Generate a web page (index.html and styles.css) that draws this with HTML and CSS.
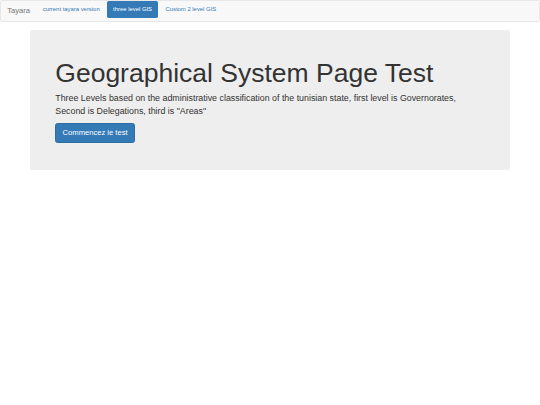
FILE: index.html
```html
<!DOCTYPE html>
<html>
<head>
<meta charset="utf-8">
<title>Geographical System Page Test</title>
<link rel="stylesheet" href="styles.css">
</head>
<body>
<nav class="navbar">
  <a class="brand" href="#">Tayara</a>
  <ul class="pills">
    <li><a href="#">current tayara version</a></li>
    <li class="active"><a href="#">three level GIS</a></li>
    <li><a href="#">Custom 2 level GIS</a></li>
  </ul>
</nav>
<div class="container">
  <div class="jumbotron">
    <h1>Geographical System Page Test</h1>
    <p>Three Levels based on the administrative classification of the tunisian state, first level is Governorates, Second is Delegations, third is "Areas"</p>
    <p class="actions"><a class="btn" href="#">Commencez le test</a></p>
  </div>
</div>
</body>
</html>
```

FILE: styles.css
```css
* { box-sizing: border-box; }
html, body { margin: 0; padding: 0; background: #fff; }
body {
  font-family: "Liberation Sans", Arial, Helvetica, sans-serif;
  color: #333;
  font-size: 5.9px;
  line-height: 1.42857;
}
a { text-decoration: none; }

.navbar {
  display: flex;
  align-items: flex-start;
  height: 22px;
  background: #f8f8f8;
  border: 1px solid #e7e7e7;
  border-radius: 1.7px;
  margin-bottom: 8.4px;
}
.brand {
  display: block;
  padding: 6.3px;
  font-size: 7.6px;
  line-height: 8.4px;
  height: 20px;
  color: #777;
}
.pills {
  display: flex;
  list-style: none;
  margin: 0;
  padding: 0;
}
.pills li + li { margin-left: 0.84px; }
.pills a {
  display: block;
  padding: 4.2px 6.3px;
  line-height: 8.4px;
  font-size: 5.9px;
  color: #337ab7;
  border-radius: 1.7px;
}
.pills .active a {
  background: #337ab7;
  color: #fff;
}

.container {
  width: 492.6px;
  margin: 0 auto;
  padding: 0 6.3px;
}
.jumbotron {
  background: #eee;
  border-radius: 2.5px;
  padding: 20.2px 25.3px;
}
.jumbotron h1 {
  margin: 8.4px 0 4.2px;
  font-size: 26.5px;
  line-height: 1.1;
  font-weight: normal;
  color: inherit;
}
.jumbotron p {
  margin: 0 0 6.3px;
  font-size: 8.85px;
  line-height: 1.4;
}
.btn {
  display: inline-block;
  vertical-align: middle;
  padding: 3.8px 6.3px;
  font-size: 7.6px;
  line-height: 1.3333;
  color: #fff;
  background: #337ab7;
  border: 0.5px solid #2e6da4;
  border-radius: 2.5px;
}
```
